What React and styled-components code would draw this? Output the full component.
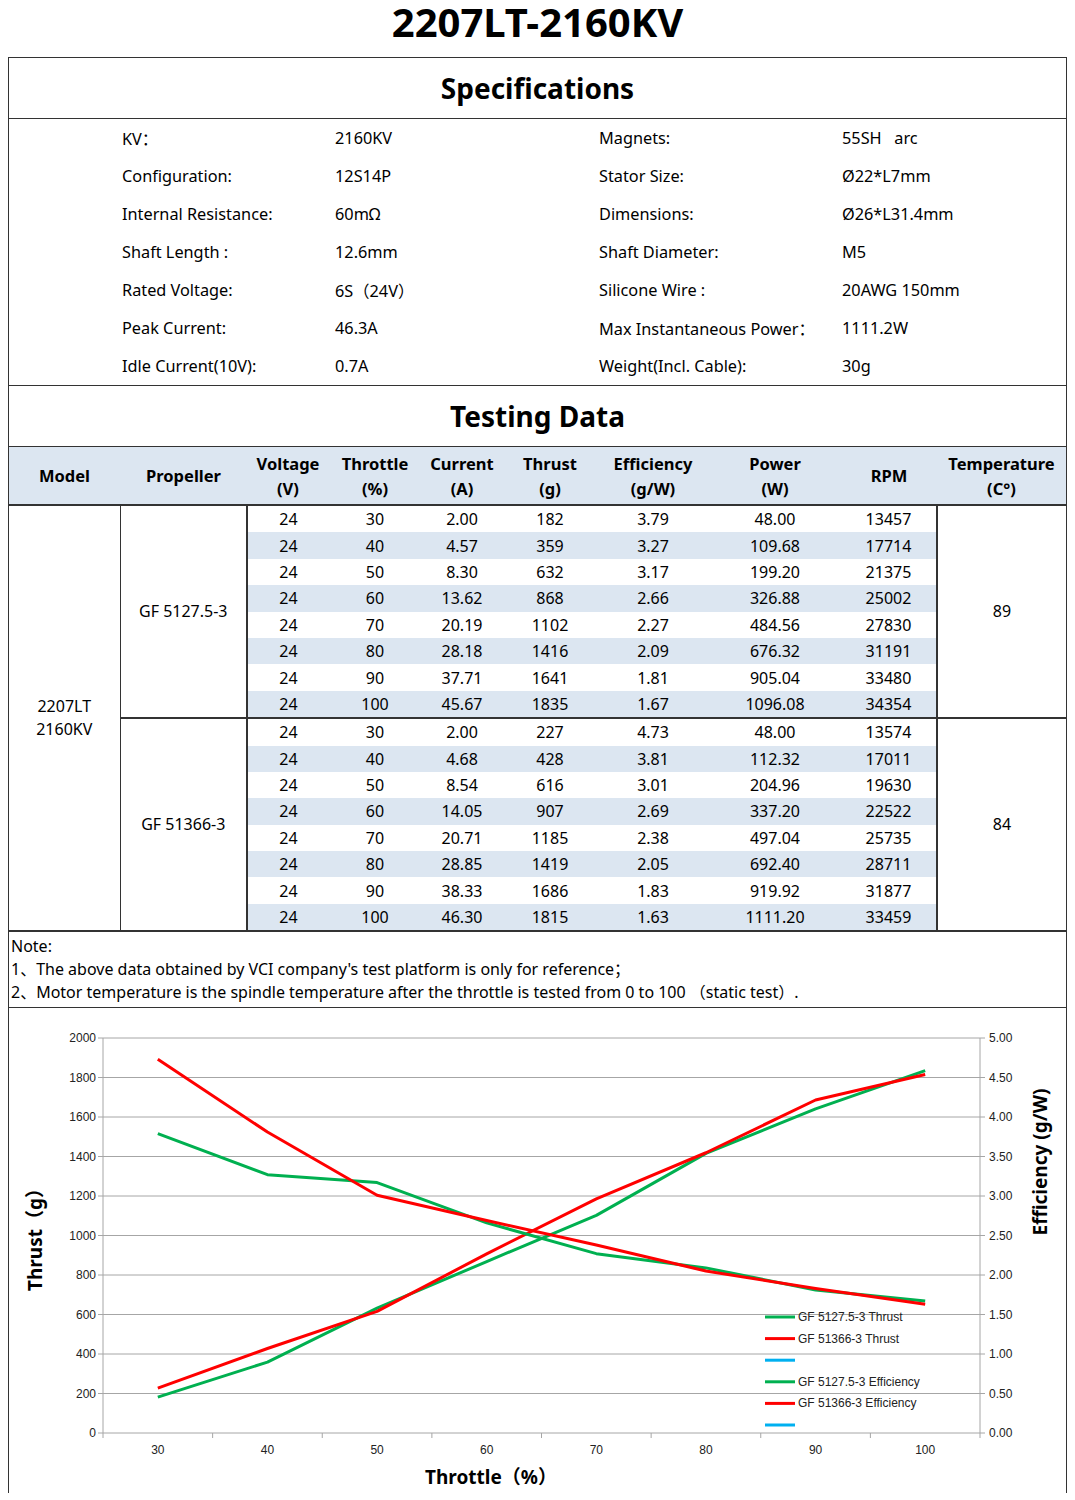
import styled, { createGlobalStyle } from 'styled-components';

const GlobalStyle = createGlobalStyle`
  body {
    margin: 0;
    background: #fff;
    color: #000;
    font-family: "Noto Sans", "Noto Sans CJK SC", sans-serif;
  }
`;

const specs = [
  ['KV：', '2160KV', 'Magnets:', '55SH   arc'],
  ['Configuration:', '12S14P', 'Stator Size:', 'Ø22*L7mm'],
  ['Internal Resistance:', '60mΩ', 'Dimensions:', 'Ø26*L31.4mm'],
  ['Shaft Length :', '12.6mm', 'Shaft Diameter:', 'M5'],
  ['Rated Voltage:', '6S（24V）', 'Silicone Wire :', '20AWG 150mm'],
  ['Peak Current:', '46.3A', 'Max Instantaneous Power：', '1111.2W'],
  ['Idle Current(10V):', '0.7A', 'Weight(Incl. Cable):', '30g'],
];

const groups = [
  {
    prop: 'GF 5127.5-3',
    temp: '89',
    rows: [
      [24, 30, '2.00', 182, '3.79', '48.00', 13457],
      [24, 40, '4.57', 359, '3.27', '109.68', 17714],
      [24, 50, '8.30', 632, '3.17', '199.20', 21375],
      [24, 60, '13.62', 868, '2.66', '326.88', 25002],
      [24, 70, '20.19', 1102, '2.27', '484.56', 27830],
      [24, 80, '28.18', 1416, '2.09', '676.32', 31191],
      [24, 90, '37.71', 1641, '1.81', '905.04', 33480],
      [24, 100, '45.67', 1835, '1.67', '1096.08', 34354],
    ],
  },
  {
    prop: 'GF 51366-3',
    temp: '84',
    rows: [
      [24, 30, '2.00', 227, '4.73', '48.00', 13574],
      [24, 40, '4.68', 428, '3.81', '112.32', 17011],
      [24, 50, '8.54', 616, '3.01', '204.96', 19630],
      [24, 60, '14.05', 907, '2.69', '337.20', 22522],
      [24, 70, '20.71', 1185, '2.38', '497.04', 25735],
      [24, 80, '28.85', 1419, '2.05', '692.40', 28711],
      [24, 90, '38.33', 1686, '1.83', '919.92', 31877],
      [24, 100, '46.30', 1815, '1.63', '1111.20', 33459],
    ],
  },
];

const Page = styled.div`
  width: 1059px;
  padding: 0 8px;
`;

const Title = styled.h1`
  margin: 0;
  height: 57px;
  display: flex;
  align-items: flex-start;
  justify-content: center;
  font-size: 40px;
  font-weight: 700;
  line-height: 44px;
`;

const Box = styled.div`
  border: 1px solid #333;
  border-bottom: none;
`;

const SectionTitle = styled.h2`
  margin: 0;
  height: 60px;
  display: flex;
  align-items: center;
  justify-content: center;
  font-size: 28px;
  font-weight: 700;
  border-bottom: 1px solid #333;
`;

const SpecGrid = styled.div`
  display: grid;
  grid-template-columns: 213px 264px 243px 1fr;
  grid-auto-rows: 38px;
  align-items: center;
  padding-left: 113px;
  font-size: 16.3px;
  border-bottom: 1px solid #333;
  white-space: pre;
`;

const Table = styled.table`
  width: 100%;
  border-collapse: collapse;
  table-layout: fixed;
  font-size: 16px;
`;

const Th = styled.th`
  height: 57px;
  padding: 0;
  background: #dce6f1;
  font-size: 16.5px;
  font-weight: 700;
  line-height: 25px;
  border-bottom: 2px solid #333;
`;

const Td = styled.td`
  height: 26.4px;
  padding: 0;
  text-align: center;
  line-height: 20px;
  background: ${(p) => (p.$shade ? '#dce6f1' : '#fff')};
  border-top: ${(p) => (p.$split ? '2px solid #333' : 'none')};
`;

const SpanCell = styled.td`
  padding: 0;
  text-align: center;
  vertical-align: middle;
  line-height: 23px;
  border-top: ${(p) => (p.$split ? '2px solid #333' : 'none')};
  border-right: ${(p) => p.$right || 'none'};
  border-left: ${(p) => p.$left || 'none'};
`;

const Note = styled.div`
  border-top: 2px solid #333;
  border-bottom: 1px solid #333;
  padding: 3px 2px 3px;
  font-size: 16px;
  line-height: 23px;
  white-space: pre;
`;

const Chart = styled.svg`
  display: block;
  width: 1057px;
  height: 485px;
  font-family: "Liberation Sans", Arial, sans-serif;
`;

const AxisTitle = styled.text`
  font-family: "Noto Sans", "Noto Sans CJK SC", sans-serif;
  font-size: 19px;
  font-weight: 700;
  fill: #000;
`;

const L = 103;
const R = 980;
const TOP = 1038;
const BOT = 1433;
const band = (R - L) / 8;
const xAt = (i) => L + band * (i + 0.5);
const yThrust = (v) => BOT - (v / 2000) * (BOT - TOP);
const yEff = (v) => BOT - (v / 5) * (BOT - TOP);

const series = [
  { color: '#00b050', pts: groups[0].rows.map((r, i) => [xAt(i), yThrust(r[3])]) },
  { color: '#ff0000', pts: groups[1].rows.map((r, i) => [xAt(i), yThrust(r[3])]) },
  { color: '#00b050', pts: groups[0].rows.map((r, i) => [xAt(i), yEff(+r[4])]) },
  { color: '#ff0000', pts: groups[1].rows.map((r, i) => [xAt(i), yEff(+r[4])]) },
];

const legend = [
  ['#00b050', 'GF 5127.5-3 Thrust'],
  ['#ff0000', 'GF 51366-3 Thrust'],
  ['#00b0f0', ''],
  ['#00b050', 'GF 5127.5-3 Efficiency'],
  ['#ff0000', 'GF 51366-3 Efficiency'],
  ['#00b0f0', ''],
];

function PerfChart() {
  const grid = Array.from({ length: 11 }, (_, i) => i);
  return (
    <Chart viewBox="9 1008 1057 485">
      {grid.map((i) => {
        const y = BOT - i * ((BOT - TOP) / 10);
        return (
          <g key={i}>
            <line x1={L} x2={R} y1={y} y2={y} stroke="#a6a6a6" strokeWidth="1" />
            <line x1={L - 5} x2={L} y1={y} y2={y} stroke="#a6a6a6" strokeWidth="1" />
            <line x1={R} x2={R + 5} y1={y} y2={y} stroke="#a6a6a6" strokeWidth="1" />
            <text x={96} y={y + 4} fontSize="12" textAnchor="end" fill="#222">
              {i * 200}
            </text>
            <text x={989} y={y + 4} fontSize="12" fill="#222">
              {(i * 0.5).toFixed(2)}
            </text>
          </g>
        );
      })}
      <line x1={L} x2={L} y1={TOP} y2={BOT} stroke="#a6a6a6" />
      <line x1={R} x2={R} y1={TOP} y2={BOT} stroke="#a6a6a6" />
      {Array.from({ length: 9 }, (_, k) => (
        <line key={k} x1={L + band * k} x2={L + band * k} y1={BOT} y2={BOT + 5} stroke="#a6a6a6" />
      ))}
      {[30, 40, 50, 60, 70, 80, 90, 100].map((t, i) => (
        <text key={t} x={xAt(i)} y={1454} fontSize="12" textAnchor="middle" fill="#222">
          {t}
        </text>
      ))}
      {series.map((s, i) => (
        <polyline
          key={i}
          points={s.pts.map((p) => p.join(',')).join(' ')}
          fill="none"
          stroke={s.color}
          strokeWidth="3"
          strokeLinejoin="round"
        />
      ))}
      {legend.map(([c, label], i) => {
        const y = 1317 + i * 21.6;
        return (
          <g key={i}>
            <line x1={765} x2={795} y1={y} y2={y} stroke={c} strokeWidth="3" />
            <text x={798} y={y + 4} fontSize="12" fill="#222">
              {label}
            </text>
          </g>
        );
      })}
      <AxisTitle transform="translate(42 1235) rotate(-90)" textAnchor="middle">
        Thrust（g）
      </AxisTitle>
      <AxisTitle transform="translate(1047 1162) rotate(-90)" textAnchor="middle">
        Efficiency (g/W)
      </AxisTitle>
      <AxisTitle x={491} y={1484} textAnchor="middle">
        Throttle（%）
      </AxisTitle>
    </Chart>
  );
}

const headers = [
  ['Model'],
  ['Propeller'],
  ['Voltage', '(V)'],
  ['Throttle', '(%)'],
  ['Current', '(A)'],
  ['Thrust', '(g)'],
  ['Efficiency', '(g/W)'],
  ['Power', '(W)'],
  ['RPM'],
  ['Temperature', '(C°)'],
];

const widths = [111, 127, 82, 92, 82, 94, 112, 132, 96, null];

export default function App() {
  return (
    <Page>
      <GlobalStyle />
      <Title>2207LT-2160KV</Title>
      <Box>
        <SectionTitle>Specifications</SectionTitle>
        <SpecGrid>
          {specs.flat().map((s, i) => (
            <span key={i}>{s}</span>
          ))}
        </SpecGrid>
        <SectionTitle>Testing Data</SectionTitle>
        <Table>
          <colgroup>
            {widths.map((w, i) => (
              <col key={i} style={w ? { width: w } : undefined} />
            ))}
          </colgroup>
          <thead>
            <tr>
              {headers.map((h, i) => (
                <Th key={i}>
                  {h.map((line, j) => (
                    <div key={j}>{line}</div>
                  ))}
                </Th>
              ))}
            </tr>
          </thead>
          <tbody>
            {groups.map((g, gi) =>
              g.rows.map((r, ri) => {
                const split = gi > 0 && ri === 0;
                return (
                  <tr key={`${gi}-${ri}`}>
                    {gi === 0 && ri === 0 && (
                      <SpanCell rowSpan={16} $right="1px solid #333">
                        2207LT
                        <br />
                        2160KV
                      </SpanCell>
                    )}
                    {ri === 0 && (
                      <SpanCell rowSpan={8} $split={split} $right="2px solid #333">
                        {g.prop}
                      </SpanCell>
                    )}
                    {r.map((v, ci) => (
                      <Td key={ci} $shade={ri % 2 === 1} $split={split}>
                        {v}
                      </Td>
                    ))}
                    {ri === 0 && (
                      <SpanCell rowSpan={8} $split={split} $left="2px solid #333">
                        {g.temp}
                      </SpanCell>
                    )}
                  </tr>
                );
              })
            )}
          </tbody>
        </Table>
        <Note>
          {'Note:\n1、The above data obtained by VCI company\'s test platform is only for reference；\n2、Motor temperature is the spindle temperature after the throttle is tested from 0 to 100 （static test）.'}
        </Note>
        <PerfChart />
      </Box>
    </Page>
  );
}
